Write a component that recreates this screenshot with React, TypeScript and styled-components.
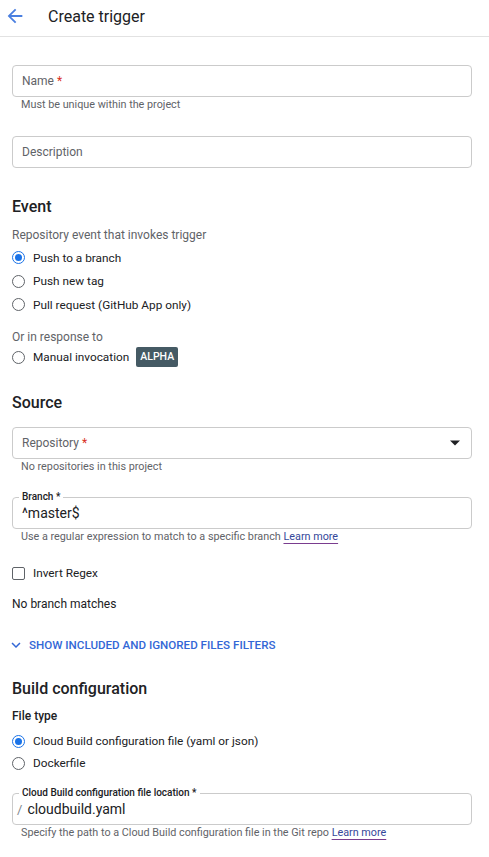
import { createGlobalStyle, styled } from 'styled-components';

const GlobalStyle = createGlobalStyle`
  html, body {
    margin: 0;
    padding: 0;
    background: #fff;
  }
  body {
    font-family: Roboto, 'Noto Sans', Arial, sans-serif;
    color: #202124;
  }
`;

const Page = styled.div`
  width: 489px;
  min-height: 857px;
  background: #fff;
`;

const Header = styled.header`
  display: flex;
  align-items: center;
  height: 37px;
  box-sizing: border-box;
  border-bottom: 1px solid #e2e2e2;
  padding: 0 0 4px 4px;
`;

const BackButton = styled.button`
  display: flex;
  align-items: center;
  justify-content: center;
  width: 22px;
  height: 22px;
  padding: 0;
  border: none;
  background: none;
  cursor: pointer;
`;

const Title = styled.h1`
  margin: 0 0 0 22px;
  font-size: 16px;
  font-weight: 400;
  color: #202124;
`;

const Form = styled.form`
  display: flex;
  flex-direction: column;
  padding: 28px 17px 0 12px;
`;

const Field = styled.div<{ $mt?: number }>`
  position: relative;
  display: flex;
  align-items: center;
  height: 32px;
  box-sizing: border-box;
  margin-top: ${(p) => p.$mt ?? 0}px;
  padding: 0 11px 0 9px;
  border: 1px solid #cbcbcb;
  border-radius: 4px;
`;

const Placeholder = styled.span`
  flex: 1;
  font-size: 12px;
  color: #5f6368;
`;

const Required = styled.span`
  color: #d93025;
`;

const FloatLabel = styled.span`
  position: absolute;
  left: 6px;
  top: -7px;
  padding: 0 3px;
  background: #fff;
  font-size: 10px;
  line-height: 12px;
  font-weight: 500;
  color: #202124;
`;

const Value = styled.span`
  font-size: 14px;
  color: #202124;
`;

const Prefix = styled.span`
  font-size: 13px;
  color: #80868b;
  margin: 0 5px 0 -5px;
`;

const Helper = styled.div`
  padding-left: 9px;
  font-size: 10.8px;
  line-height: 16px;
  color: #5f6368;
`;

const Link = styled.a`
  color: #35489a;
  text-decoration: underline;
  text-decoration-color: #7a3d8f;
  text-underline-offset: 3px;
`;

const SectionTitle = styled.h2<{ $mt: number }>`
  margin: ${(p) => p.$mt}px 0 0;
  font-size: 16px;
  line-height: 24px;
  font-weight: 500;
  color: #202124;
`;

const Text = styled.div<{ $mt: number; $muted?: boolean; $bold?: boolean }>`
  margin-top: ${(p) => p.$mt}px;
  font-size: 12px;
  line-height: 16px;
  font-weight: ${(p) => (p.$bold ? 500 : 400)};
  color: ${(p) => (p.$muted ? '#5f6368' : '#202124')};
`;

const OptionList = styled.div<{ $mt: number }>`
  display: flex;
  flex-direction: column;
  margin-top: ${(p) => p.$mt}px;
`;

const Option = styled.label<{ $h?: number }>`
  display: flex;
  align-items: center;
  gap: 8px;
  height: ${(p) => p.$h ?? 23.5}px;
  font-size: 11.8px;
  color: #202124;
`;

const Radio = styled.span<{ $checked?: boolean }>`
  position: relative;
  width: 13px;
  height: 13px;
  box-sizing: border-box;
  border-radius: 50%;
  border: 1.5px solid ${(p) => (p.$checked ? '#1a73e8' : '#5f6368')};
  flex: none;

  &::after {
    content: '';
    display: ${(p) => (p.$checked ? 'block' : 'none')};
    position: absolute;
    inset: 2px;
    border-radius: 50%;
    background: #1a73e8;
  }
`;

const Checkbox = styled.span`
  width: 13px;
  height: 13px;
  box-sizing: border-box;
  border: 1.5px solid #5f6368;
  border-radius: 2px;
  flex: none;
`;

const Badge = styled.span`
  margin-left: -1px;
  padding: 0 4px;
  height: 20px;
  line-height: 20px;
  border-radius: 2px;
  background: #455a64;
  color: #fff;
  font-size: 10.5px;
  font-weight: 500;
`;

const FiltersToggle = styled.button`
  display: flex;
  align-items: center;
  gap: 4px;
  margin: 25px 0 0 -5px;
  padding: 0;
  height: 16px;
  border: none;
  background: none;
  font-family: inherit;
  font-size: 11.6px;
  font-weight: 500;
  color: #3367d6;
  text-transform: uppercase;
  cursor: pointer;
`;

export default function App() {
  return (
    <Page>
      <GlobalStyle />
      <Header>
        <BackButton aria-label='Back'>
          <svg width='22' height='22' viewBox='0 0 24 24'>
            <path
              d='M20 11H7.83l5.59-5.59L12 4l-8 8 8 8 1.41-1.41L7.83 13H20v-2z'
              fill='#4a7fe0'
            />
          </svg>
        </BackButton>
        <Title>Create trigger</Title>
      </Header>

      <Form>
        <Field>
          <Placeholder>
            Name <Required>*</Required>
          </Placeholder>
        </Field>
        <Helper>Must be unique within the project</Helper>

        <Field $mt={23}>
          <Placeholder>Description</Placeholder>
        </Field>

        <SectionTitle $mt={27}>Event</SectionTitle>
        <Text $mt={8} $muted>
          Repository event that invokes trigger
        </Text>
        <OptionList $mt={3}>
          <Option>
            <Radio $checked />
            Push to a branch
          </Option>
          <Option>
            <Radio />
            Push new tag
          </Option>
          <Option>
            <Radio />
            Pull request (GitHub App only)
          </Option>
        </OptionList>
        <Text $mt={12.5} $muted>
          Or in response to
        </Text>
        <OptionList $mt={0}>
          <Option $h={24}>
            <Radio />
            Manual invocation
            <Badge>ALPHA</Badge>
          </Option>
        </OptionList>

        <SectionTitle $mt={22}>Source</SectionTitle>
        <Field $mt={12}>
          <Placeholder>
            Repository <Required>*</Required>
          </Placeholder>
          <svg width='10' height='6' viewBox='0 0 10 5'>
            <path d='M0 0l5 5 5-5z' fill='#202124' />
          </svg>
        </Field>
        <Helper>No repositories in this project</Helper>

        <Field $mt={22}>
          <FloatLabel>Branch *</FloatLabel>
          <Value>^master$</Value>
        </Field>
        <Helper>
          Use a regular expression to match to a specific branch{' '}
          <Link href='#'>Learn more</Link>
        </Helper>

        <OptionList $mt={16}>
          <Option $h={24}>
            <Checkbox />
            Invert Regex
          </Option>
        </OptionList>
        <Text $mt={11}>No branch matches</Text>

        <FiltersToggle type='button'>
          <svg width='18' height='18' viewBox='0 0 24 24'>
            <path
              d='M7.41 8.59L12 13.17l4.59-4.58L18 10l-6 6-6-6 1.41-1.41z'
              fill='#3367d6'
            />
          </svg>
          Show included and ignored files filters
        </FiltersToggle>

        <SectionTitle $mt={24}>Build configuration</SectionTitle>
        <Text $mt={7} $bold>
          File type
        </Text>
        <OptionList $mt={6}>
          <Option $h={22}>
            <Radio $checked />
            Cloud Build configuration file (yaml or json)
          </Option>
          <Option $h={22}>
            <Radio />
            Dockerfile
          </Option>
        </OptionList>

        <Field $mt={19}>
          <FloatLabel>Cloud Build configuration file location *</FloatLabel>
          <Prefix>/</Prefix>
          <Value>cloudbuild.yaml</Value>
        </Field>
        <Helper>
          Specify the path to a Cloud Build configuration file in the Git repo{' '}
          <Link href='#'>Learn more</Link>
        </Helper>
      </Form>
    </Page>
  );
}
